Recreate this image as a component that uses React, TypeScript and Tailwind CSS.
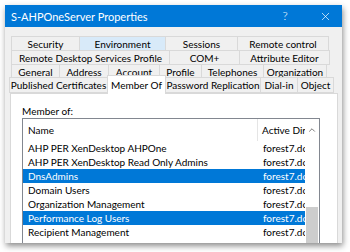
import { ChevronUp, X } from "lucide-react"

type Tab = { label: string; w: number; hover?: boolean }

const rows: Tab[][] = [
  [
    { label: "Security", w: 69 },
    { label: "Environment", w: 87, hover: true },
    { label: "Sessions", w: 73 },
    { label: "Remote control", w: 92 },
  ],
  [
    { label: "Remote Desktop Services Profile", w: 159 },
    { label: "COM+", w: 71 },
    { label: "Attribute Editor", w: 91 },
  ],
  [
    { label: "General", w: 49 },
    { label: "Address", w: 50 },
    { label: "Account", w: 52 },
    { label: "Profile", w: 43 },
    { label: "Telephones", w: 63 },
    { label: "Organization", w: 64 },
  ],
]

const groups = [
  { name: "AHP PER XenDesktop AHPOne", sel: false },
  { name: "AHP PER XenDesktop Read Only Admins", sel: false },
  { name: "DnsAdmins", sel: true },
  { name: "Domain Users", sel: false },
  { name: "Organization Management", sel: false },
  { name: "Performance Log Users", sel: true },
  { name: "Recipient Management", sel: false },
]

function TabCell({ tab }: { tab: Tab }) {
  return (
    <div
      className={`-ml-px flex h-full items-center justify-center border border-[#d9d9d9] first:ml-0 ${
        tab.hover ? "bg-[#d8eaf9]" : "bg-[#f0f0f0]"
      }`}
      style={{ width: tab.w }}
    >
      <span className="whitespace-nowrap">{tab.label}</span>
    </div>
  )
}

export default function App() {
  return (
    <div className="h-[252px] w-[350px] overflow-hidden bg-white p-[5px] text-[10px] leading-none text-black [font-family:Lato,'Liberation_Sans',sans-serif]">
      <div className="flex h-[238px] w-[337px] flex-col overflow-hidden bg-[#f0f0f0] shadow-[1px_3px_6px_rgba(0,0,0,0.45)]">
        {/* Title bar */}
        <div className="flex h-[22px] shrink-0 items-center bg-[#0078d7] pl-[6px] pr-[5px] text-[11px] text-white">
          <span className="flex-1">S-AHPOneServer Properties</span>
          <span className="mr-[12px] w-[32px] text-center text-[12px] font-light">?</span>
          <span className="flex w-[24px] justify-center">
            <X size={13} strokeWidth={1.3} />
          </span>
        </div>

        {/* Tab rows */}
        <div className="flex flex-col pl-[6px] pt-[9px]">
          {rows.map((row, i) => (
            <div key={i} className="-mt-px flex h-[15px] first:mt-0">
              {row.map((t) => (
                <TabCell key={t.label} tab={t} />
              ))}
            </div>
          ))}
        </div>
        <div className="-mt-[4px] flex h-[18px] shrink-0 items-end pl-[4px]">
          <div className="flex h-[16px] w-[99px] items-center justify-center border border-[#d9d9d9] bg-[#f0f0f0]">
            Published Certificates
          </div>
          <div className="relative z-10 -mb-px -ml-px flex h-[19px] w-[59px] items-center justify-center border border-b-0 border-[#d9d9d9] bg-white">
            Member Of
          </div>
          <div className="-ml-px flex h-[16px] w-[96px] items-center justify-center border border-[#d9d9d9] bg-[#f0f0f0]">
            Password Replication
          </div>
          <div className="-ml-px flex h-[16px] w-[38px] items-center justify-center border border-[#d9d9d9] bg-[#f0f0f0]">
            Dial-in
          </div>
          <div className="-ml-px flex h-[16px] w-[37px] items-center justify-center border border-[#d9d9d9] bg-[#f0f0f0]">
            Object
          </div>
        </div>

        {/* Panel */}
        <div className="ml-[5px] mr-[4px] flex flex-1 flex-col border border-b-0 border-[#d9d9d9] bg-white pl-[11px] pr-[17px] pt-[12px]">
          <div className="h-[12px]">Member of:</div>
          <div className="flex flex-1 border border-b-0 border-[#828790]">
            <div className="flex flex-1 flex-col overflow-hidden">
              <div className="flex h-[22px] shrink-0 items-center">
                <div className="flex h-full w-[235px] shrink-0 items-center border-r border-[#e5e5e5] pl-[5px]">Name</div>
                <div className="whitespace-nowrap pl-[4px]">Active Directory</div>
              </div>
              {groups.map((g) => (
                <div
                  key={g.name}
                  className={`flex h-[14px] shrink-0 items-center ${
                    g.sel ? "bg-[#0078d7] text-white" : ""
                  }`}
                >
                  <div className="w-[235px] shrink-0 whitespace-nowrap pl-[5px]">{g.name}</div>
                  <div className="whitespace-nowrap pl-[5px]">forest7.domain</div>
                </div>
              ))}
            </div>
            <div className="flex w-[14px] shrink-0 flex-col bg-white">
              <div className="flex h-[22px] items-center justify-center">
                <ChevronUp size={10} strokeWidth={2} className="text-[#606060]" />
              </div>
              <div className="flex-1" />
              <div className="mx-[1px] h-[36px] bg-[#cdcdcd]" />
            </div>
          </div>
        </div>
      </div>
    </div>
  )
}
